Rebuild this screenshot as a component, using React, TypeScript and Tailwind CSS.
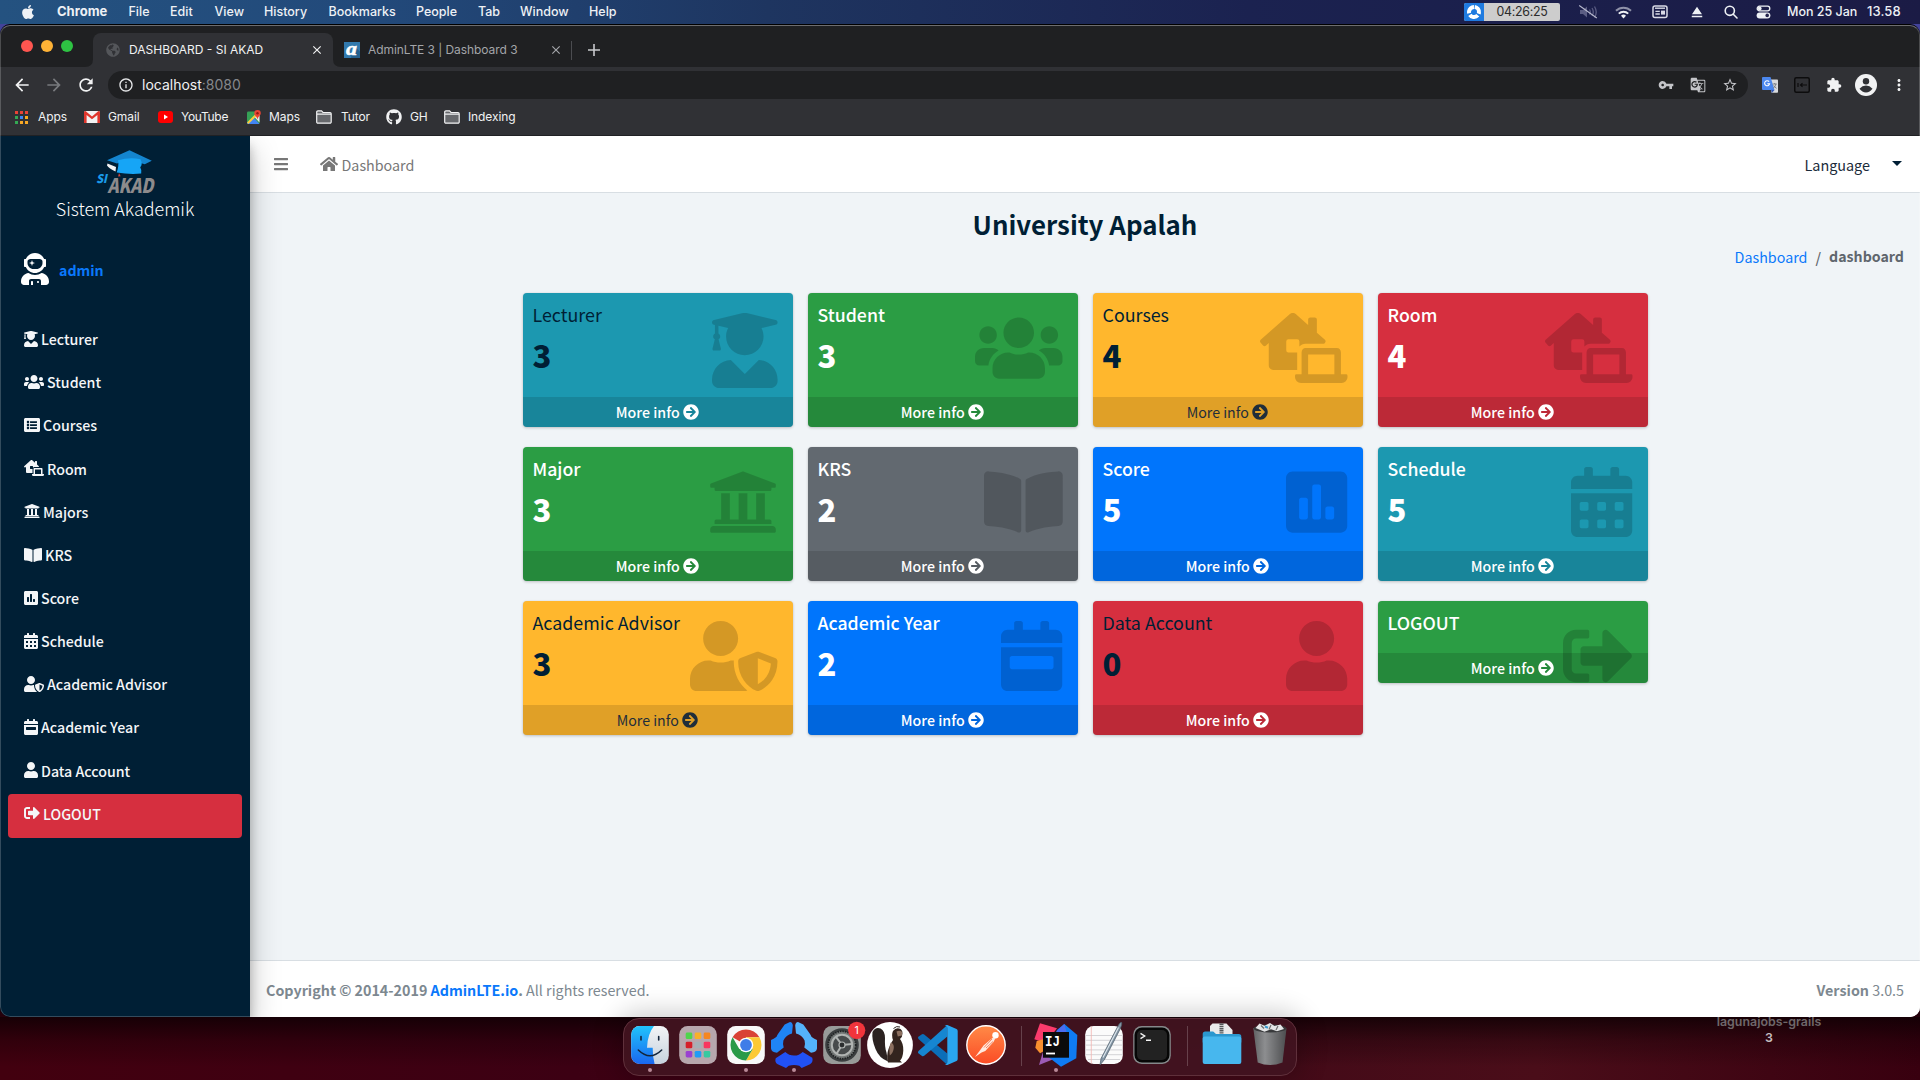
import React from "react";
import type { IconType } from "react-icons";
import {
  FaApple,
  FaArrowCircleRight,
  FaBars,
  FaBookOpen,
  FaCalendarAlt,
  FaCalendarWeek,
  FaGithub,
  FaGlobeAmericas,
  FaHome,
  FaLaptopHouse,
  FaListAlt,
  FaPoll,
  FaSignOutAlt,
  FaUniversity,
  FaUser,
  FaUserAstronaut,
  FaUserGraduate,
  FaUserShield,
  FaUsers,
} from "react-icons/fa";
import {
  MdArrowBack,
  MdArrowForward,
  MdClose,
  MdEject,
  MdExtension,
  MdGTranslate,
  MdInfoOutline,
  MdMoreVert,
  MdRefresh,
  MdStarBorder,
  MdVpnKey,
} from "react-icons/md";

const ui = "font-['Inter',sans-serif]";
const page = "font-['Noto_Sans_CJK_SC',sans-serif]";

/* ---------- macOS menu bar ---------- */

const menus = [
  { label: "File", cell: "w-[41.5px]" },
  { label: "Edit", cell: "w-[44.5px]" },
  { label: "View", cell: "w-[49.5px]" },
  { label: "History", cell: "w-[64.5px]" },
  { label: "Bookmarks", cell: "w-[87.5px]" },
  { label: "People", cell: "w-[62px]" },
  { label: "Tab", cell: "w-[42px]" },
  { label: "Window", cell: "w-[69px]" },
  { label: "Help", cell: "w-[40px]" },
];

function MenuBar() {
  return (
    <header
      className={`${ui} flex h-6 shrink-0 items-center bg-[linear-gradient(90deg,#245280_0%,#22497a_20%,#1e3560_40%,#1b2250_65%,#1b1b45_100%)] text-[12.5px] font-medium text-[#eef1f5]`}
    >
      <div className="flex w-[57px] shrink-0 pl-[20px]">
        <FaApple className="size-[16px]" />
      </div>
      <span className="w-[71.5px] shrink-0 text-[13px] font-bold">Chrome</span>
      {menus.map((m) => (
        <span key={m.label} className={`shrink-0 pt-px ${m.cell}`}>
          {m.label}
        </span>
      ))}
      <div className="ml-auto flex h-6 items-center">
        <div className="flex h-[18px] w-24 items-center overflow-hidden rounded-[2px] bg-[#cdcdcd] text-[#2b2b2b]">
          <span className="flex h-full w-5 items-center justify-center bg-[#1f7be0]">
            <svg viewBox="0 0 16 16" className="size-4" fill="none" stroke="#fff" strokeWidth="4">
              <circle cx="8" cy="8" r="5" strokeDasharray="8.9 1.57" transform="rotate(-82 8 8)" />
            </svg>
          </span>
          <span className="w-[76px] pt-px text-center text-[12.4px] font-normal tracking-[-0.3px]">04:26:25</span>
        </div>
        <div className="ml-[10px] flex w-9 justify-center">
          <svg viewBox="0 0 20 16" className="h-4 w-5">
            <g fill="#5b5d83">
              <path d="M2 6h3l4-3.4v10.8L5 10H2z" />
            </g>
            <path d="M11.5 5.5q1.6 2.5 0 5M14 4q2.6 4 0 8M16.500 2.500q3.500 5.500 0 11" stroke="#5b5d83" strokeWidth="1.3" fill="none" />
            <path d="M1.2 1.5 18.8 14" stroke="#b9bace" strokeWidth="1.1" />
          </svg>
        </div>
        <div className="flex w-[35px] justify-center">
          <svg viewBox="0 0 17 13" className="h-[13px] w-[17px]" fill="none" stroke="#eef1f5" strokeWidth="2">
            <path d="M1 4.8a10.6 10.6 0 0 1 15 0" strokeOpacity=".55" />
            <path d="M3.8 7.6a6.7 6.7 0 0 1 9.4 0" />
            <path d="M8.5 12.4 6 9.8a3.5 3.5 0 0 1 5 0z" fill="#eef1f5" stroke="none" />
          </svg>
        </div>
        <div className="flex w-[37px] justify-center">
          <svg viewBox="0 0 16 14" className="h-[14px] w-4" fill="none" stroke="#d9dae6">
            <rect x="1" y="1" width="14" height="11.4" rx="2" strokeWidth="1.5" />
            <path d="M3 3.2h10" strokeWidth="1.4" />
            <path d="M3.4 6.4h4.4M3.4 9h4.4" strokeWidth="1.3" />
            <rect x="9" y="5.6" width="4" height="4" fill="#d9dae6" stroke="none" />
          </svg>
        </div>
        <div className="flex w-[37px] justify-center">
          <MdEject className="size-[18px]" />
        </div>
        <div className="flex w-8 justify-center">
          <svg viewBox="0 0 14 14" className="size-[14px]" fill="none" stroke="#eef1f5" strokeWidth="1.6" strokeLinecap="round">
            <circle cx="5.8" cy="5.8" r="4.6" />
            <path d="m9.3 9.3 3.7 3.7" />
          </svg>
        </div>
        <div className="flex w-8 justify-center">
          <svg viewBox="0 0 15 14" className="h-[14px] w-[15px]">
            <rect x="1.2" y="1.2" width="12.6" height="4.6" rx="2.3" fill="none" stroke="#eef1f5" strokeWidth="1.3" />
            <circle cx="3.7" cy="3.5" r="1.9" fill="#eef1f5" />
            <rect x=".6" y="7.4" width="13.8" height="6" rx="3" fill="#eef1f5" />
            <circle cx="11.2" cy="10.4" r="1.8" fill="#24244d" />
          </svg>
        </div>
        <span className="ml-2 w-20 whitespace-nowrap">Mon 25 Jan</span>
        <span className="w-[53px] text-[13px] tracking-[0.1px]">13.58</span>
      </div>
    </header>
  );
}

/* ---------- Chrome window frame ---------- */

function TabStrip() {
  return (
    <div className={`${ui} flex h-[42px] shrink-0 items-end bg-[#1f2022] text-[12px]`}>
      <div className="flex h-[42px] w-[93px] shrink-0 items-center gap-2 pl-[21px]">
        <span className="size-3 rounded-full bg-[#fe5650]" />
        <span className="size-3 rounded-full bg-[#feb236]" />
        <span className="size-3 rounded-full bg-[#2ec343]" />
      </div>
      <div className="relative flex h-[34px] w-60 shrink-0 items-center rounded-t-lg bg-[#303135] pl-[13px] text-[#f1f2f3]">
        <svg viewBox="0 0 8 8" className="absolute bottom-0 -left-2 size-2" fill="#303135">
          <path d="M8 0v8H0q8 0 8-8z" />
        </svg>
        <svg viewBox="0 0 8 8" className="absolute -right-2 bottom-0 size-2" fill="#303135">
          <path d="M0 0v8h8q-8 0-8-8z" />
        </svg>
        <FaGlobeAmericas className="size-[14px] text-[#54565a]" />
        <span className="ml-[9px] w-[181px] whitespace-nowrap">DASHBOARD - SI AKAD</span>
        <MdClose className="size-[14px]" />
      </div>
      <div className="flex h-[34px] w-[238px] shrink-0 items-center pl-[11px] text-[#a3a5a9]">
        <svg viewBox="0 0 16 16" className="size-4">
          <rect width="16" height="16" fill="#3279ad" />
          <path d="M10 4 16 9.500V16H7z" fill="#24608e" />
          <text x="2" y="13.200" fontSize="18" fontStyle="italic" fontWeight="900" fill="#fff" stroke="#fff" strokeWidth=".5" fontFamily="Liberation Serif, serif" textLength="11" lengthAdjust="spacingAndGlyphs">
            a
          </text>
        </svg>
        <span className="ml-2 w-[181px] whitespace-nowrap tracking-[-0.06px]">AdminLTE 3 | Dashboard 3</span>
        <MdClose className="size-[14px]" />
      </div>
      <div className="flex h-[34px] items-center">
        <span className="h-[19px] w-px bg-[#4b4c50]" />
        <svg viewBox="0 0 12 12" className="ml-4 size-3" stroke="#c9cacd" strokeWidth="1.6">
          <path d="M6 0v12M0 6h12" />
        </svg>
      </div>
    </div>
  );
}

function Toolbar() {
  return (
    <div className={`${ui} flex h-9 shrink-0 items-center bg-[#303135] text-[#f1f2f3]`}>
      <div className="flex w-[108px] shrink-0 items-center pl-[12px]">
        <MdArrowBack className="size-5" />
        <MdArrowForward className="ml-3 size-5 text-[#77797d]" />
        <MdRefresh className="ml-3 size-5" />
      </div>
      <div className="flex h-7 w-[1640px] shrink-0 items-center rounded-full bg-[#1f2022] pl-[10px] text-[14px]">
        <MdInfoOutline className="size-4 text-[#e6e7e9]" />
        <span className="ml-2 pb-px">
          localhost<span className="text-[#85878b]">:8080</span>
        </span>
        <div className="mr-[10px] ml-auto flex items-center gap-4 text-[#c3c4c8]">
          <MdVpnKey className="size-4" />
          <MdGTranslate className="size-4" />
          <MdStarBorder className="size-4" />
        </div>
      </div>
      <div className="flex items-center pl-[14px]">
        <svg viewBox="0 0 16 16" className="size-4">
          <path d="M7 2.500h8.200a.8.800 0 0 1 .8.800V15a.8.800 0 0 1-.8.800H9.500z" fill="#d8dadd" />
          <path d="M1 0h7.500l4 13H1a1 1 0 0 1-1-1V1a1 1 0 0 1 1-1z" fill="#4b87ee" />
          <path d="m9 12.700 3.500.3-2.600 2.900z" fill="#2f56b5" />
          <path d="M7.100 4.700a2.500 2.500 0 1 0 .5 2H5.300" fill="none" stroke="#fff" strokeWidth="1.100" />
          <path d="M10.500 7h4.300M12.700 6v1m1.200 0q-.5 2.500-2.600 4.200M11.600 8.500q1 1.800 3 2.800" fill="none" stroke="#6c7076" strokeWidth=".8" />
        </svg>
        <svg viewBox="0 0 16 16" className="ml-4 size-4" fill="none" stroke="#0c0c0d">
          <rect x=".75" y=".75" width="14.500" height="14.500" rx="1.500" strokeWidth="1.500" />
          <path d="M4 6v4M6.500 8H13M8.500 6.300 6.500 8l2 1.700" strokeWidth="1.200" />
        </svg>
        <MdExtension className="ml-4 size-4" />
        <svg viewBox="0 0 22 22" className="ml-[13px] size-[22px]">
          <circle cx="11" cy="11" r="11" fill="#f1f2f3" />
          <circle cx="11" cy="7.200" r="3.200" fill="#303135" />
          <path d="M4.500 14.800q2.800-3.200 6.500-3.200t6.500 3.200q-2.600 3.700-6.500 3.700t-6.500-3.700z" fill="#303135" />
        </svg>
        <MdMoreVert className="ml-[13px] size-[18px]" />
      </div>
    </div>
  );
}

function FolderOutline() {
  return (
    <svg viewBox="0 0 16 14" className="h-[14px] w-4">
      <path d="M.7 2a1.200 1.200 0 0 1 1.200-1.200h3.600L7 2.500h7a1.200 1.200 0 0 1 1.200 1.200v8.300a1.200 1.200 0 0 1-1.200 1.200H1.900A1.200 1.200 0 0 1 .7 12z" fill="#66686c" stroke="#f1f2f3" strokeWidth="1.200" />
      <path d="M1 4.200h14" stroke="#f1f2f3" strokeWidth="1.200" />
    </svg>
  );
}

const appDots = [
  ["#ea4335", "#ea4335", "#ea4335"],
  ["#34a853", "#4285f4", "#fbab1c"],
  ["#34a853", "#f9a825", "#f9a825"],
];

function Bookmarks() {
  return (
    <div className={`${ui} flex h-[33px] shrink-0 items-center border-b border-[#202124] bg-[#303135] pb-[4px] text-[12px] tracking-[-0.1px] text-[#f1f2f3]`}>
      <div className="flex w-[84px] shrink-0 items-center pl-[15px]">
        <svg viewBox="0 0 13 13" className="size-[13px]">
          {appDots.map((row, y) =>
            row.map((c, x) => <rect key={`${x}-${y}`} x={x * 5} y={y * 5} width="3" height="3" fill={c} />),
          )}
        </svg>
        <span className="ml-[10px]">Apps</span>
      </div>
      <div className="flex w-[74px] shrink-0 items-center">
        <svg viewBox="0 0 16 12" className="h-3 w-4">
          <path d="M1.500 0h13A1.500 1.500 0 0 1 16 1.500V12H0V1.500A1.500 1.500 0 0 1 1.500 0z" fill="#f2f2f2" />
          <path d="M0 1.500A1.500 1.500 0 0 1 1.500 0L8 5.500 14.500 0A1.500 1.500 0 0 1 16 1.500V12h-2.600V4L8 8.300 2.600 4v8H0z" fill="#e0362c" />
        </svg>
        <span className="ml-2">Gmail</span>
      </div>
      <div className="flex w-[89px] shrink-0 items-center tracking-[-0.3px]">
        <svg viewBox="0 0 15 12" className="h-3 w-[15px]">
          <rect width="15" height="12" rx="3" fill="#f00" />
          <path d="M6 3.500v5L10 6z" fill="#fff" />
        </svg>
        <span className="ml-2">YouTube</span>
      </div>
      <div className="flex w-[69px] shrink-0 items-center">
        <svg viewBox="0 0 14 14" className="size-[14px]">
          <rect y="1.500" width="12.500" height="12.500" rx="1.200" fill="#35a156" />
          <path d="m0 13 6.500-5.500L12.500 14H1a1 1 0 0 1-1-1z" fill="#4285f4" />
          <path d="m7.500 7 5-4v9.500z" fill="#e8e8e8" />
          <path d="M0 12.500 10.500 2l1.500 1.500L1.500 14z" fill="#fbcb3c" />
          <path d="M10.500 0A3.300 3.300 0 0 1 13.800 3.300C13.800 5.500 11 6.500 10.500 9.500 10 6.500 7.200 5.500 7.200 3.300A3.300 3.300 0 0 1 10.500 0z" fill="#e94435" />
          <circle cx="10.500" cy="3.300" r="1.200" fill="#8e1b12" />
        </svg>
        <span className="ml-2">Maps</span>
      </div>
      <div className="flex w-[70px] shrink-0 items-center">
        <FolderOutline />
        <span className="ml-[9px]">Tutor</span>
      </div>
      <div className="flex w-[58px] shrink-0 items-center">
        <FaGithub className="size-4" />
        <span className="ml-2">GH</span>
      </div>
      <div className="flex items-center">
        <FolderOutline />
        <span className="ml-2">Indexing</span>
      </div>
    </div>
  );
}

/* ---------- Sidebar ---------- */

const navItems: { label: string; icon: IconType; width: string }[] = [
  { label: "Lecturer", icon: FaUserGraduate, width: "w-[14px]" },
  { label: "Student", icon: FaUsers, width: "w-5" },
  { label: "Courses", icon: FaListAlt, width: "w-4" },
  { label: "Room", icon: FaLaptopHouse, width: "w-5" },
  { label: "Majors", icon: FaUniversity, width: "w-4" },
  { label: "KRS", icon: FaBookOpen, width: "w-[18px]" },
  { label: "Score", icon: FaPoll, width: "w-[14px]" },
  { label: "Schedule", icon: FaCalendarAlt, width: "w-[14px]" },
  { label: "Academic Advisor", icon: FaUserShield, width: "w-5" },
  { label: "Academic Year", icon: FaCalendarWeek, width: "w-[14px]" },
  { label: "Data Account", icon: FaUser, width: "w-[14px]" },
];

function Logo() {
  return (
    <svg viewBox="0 0 58 44" className="ml-24 h-11 w-[58px] overflow-visible">
      <path d="M11.500 13.500 20 17l-.5 4.500Q13 18.500 11 15.500z" fill="#f4f4f4" />
      <path d="m33.500.3 22.300 10.500-7 3.400L32 9.500l-11 4-10-3.200z" fill="#1485cf" />
      <path d="M22 10.200q12-3.400 22.500-1 2.500 5-.3 8 2 3.300 1 6.300-11 1.300-24.500-1 2.500-7 1.300-12.300z" fill="#16a5f6" />
      <path d="m23 23 1.600 3.300-2.500.3z" fill="#d6463c" />
      <g fontFamily="Noto Sans CJK SC, sans-serif" fontStyle="italic" fontWeight="900">
        <text x="0" y="32.500" fontSize="12" fill="#1a9bea" textLength="11" lengthAdjust="spacingAndGlyphs">
          SI
        </text>
        <text x="11.500" y="42.500" fontSize="20" fill="#8d8b8c" textLength="46" lengthAdjust="spacingAndGlyphs">
          AKAD
        </text>
      </g>
    </svg>
  );
}

function Sidebar() {
  return (
    <aside className="z-10 flex w-[250px] shrink-0 flex-col bg-[#001f35] pt-[14px] text-[14.2px] text-[#f4f6f8] shadow-[0_14px_28px_rgba(0,0,0,0.25),0_10px_10px_rgba(0,0,0,0.22)]">
      <Logo />
      <div className="h-7 text-center text-[17.9px] leading-7 font-light text-white">Sistem Akademik</div>
      <div className="mt-[31px] flex h-8 items-center pl-[21px]">
        <FaUserAstronaut className="h-8 w-7 text-white" />
        <span className="ml-[10px] pt-[3px] font-bold text-[#0a78fb]">admin</span>
      </div>
      <nav className="mt-[34.35px] font-medium">
        {navItems.map(({ label, icon: Icon, width }) => (
          <div key={label} className="h-[43.15px]">
            <a className="flex h-[39px] items-center gap-[3px] pl-6">
              <Icon className={`h-4 ${width}`} />
              <span className="pt-[2px]">{label}</span>
            </a>
          </div>
        ))}
        <a className="mx-2 flex h-11 items-center gap-[3px] rounded bg-[#d62f3f] pb-[5px] pl-4">
          <FaSignOutAlt className="size-4" />
          <span className="pt-[2px]">LOGOUT</span>
        </a>
      </nav>
    </aside>
  );
}

/* ---------- Dashboard content ---------- */

type Card = {
  title: string;
  value?: string;
  icon: IconType;
  bg: string;
  text?: string;
  link?: string;
  size?: string;
};

const navy = "text-[17.85px] text-[#001f35]";
const white = "text-[17.7px] font-medium text-white";
const dimLink = "text-[#1f2d3a]";

const cards: Card[] = [
  { title: "Lecturer", value: "3", icon: FaUserGraduate, bg: "bg-[#1c98b0]", text: navy, size: "h-[75px] w-[65.6px]" },
  { title: "Student", value: "3", icon: FaUsers, bg: "bg-[#2b9d44]", size: "h-[70px] w-[87.5px]" },
  { title: "Courses", value: "4", icon: FaLaptopHouse, bg: "bg-[#ffb72d]", text: navy, link: dimLink, size: "h-[70px] w-[87.5px]" },
  { title: "Room", value: "4", icon: FaLaptopHouse, bg: "bg-[#d62f3f]", size: "h-[70px] w-[87.5px]" },
  { title: "Major", value: "3", icon: FaUniversity, bg: "bg-[#2b9d44]", size: "size-[70px]" },
  { title: "KRS", value: "2", icon: FaBookOpen, bg: "bg-[#626970]", size: "h-[70px] w-[78.75px]" },
  { title: "Score", value: "5", icon: FaPoll, bg: "bg-[#0075fc]", size: "h-[70px] w-[61.25px]" },
  { title: "Schedule", value: "5", icon: FaCalendarAlt, bg: "bg-[#1c98b0]", size: "h-[70px] w-[61.25px]" },
  { title: "Academic Advisor", value: "3", icon: FaUserShield, bg: "bg-[#ffb72d]", text: navy, link: dimLink, size: "h-[70px] w-[87.5px]" },
  { title: "Academic Year", value: "2", icon: FaCalendarWeek, bg: "bg-[#0075fc]", size: "h-[70px] w-[61.25px]" },
  { title: "Data Account", value: "0", icon: FaUser, bg: "bg-[#d62f3f]", text: navy, size: "h-[70px] w-[61.25px]" },
  { title: "LOGOUT", icon: FaSignOutAlt, bg: "bg-[#2b9d44]", size: "size-[70px]" },
];

function InfoCard({ title, value, icon: Icon, bg, text = white, link = "font-medium text-white", size }: Card) {
  return (
    <section className={`relative rounded shadow-[0_0_1px_rgba(0,0,0,0.125),0_1px_3px_rgba(0,0,0,0.2)] ${bg}`}>
      <div className={`px-[10px] pt-[9px] ${value ? "h-[104px]" : "h-[52px]"} ${text}`}>
        <h5 className="leading-6">{title}</h5>
        {value && <div className="mt-[8.5px] text-[31px] leading-10 font-black">{value}</div>}
      </div>
      <div className={`flex h-[30px] items-center justify-center gap-[3.5px] rounded-b bg-black/12 text-[14.2px] ${link}`}>
        <span className="pt-[2px]">More info</span>
        <FaArrowCircleRight className="size-4" />
      </div>
      <Icon className={`absolute top-5 right-[15px] text-black/17 ${size}`} />
    </section>
  );
}

function Dashboard() {
  return (
    <main className="flex min-w-0 flex-1 flex-col bg-[#f0f4f7]">
      <div className="flex h-[57px] shrink-0 items-center border-b border-[#d8dee3] bg-white text-[14.3px] text-[#777777]">
        <FaBars className="ml-6 h-4 w-[14px]" />
        <FaHome className="ml-8 h-4 w-[18px]" />
        <span className="ml-[3.5px] pt-[2px]">Dashboard</span>
        <span className="mr-[22px] ml-auto pt-[2px] text-[14.4px] text-[#1b2b3a]">Language</span>
        <span className="mr-[18px] mb-[2px] border-x-[5px] border-t-[5px] border-x-transparent border-t-[#001f35]" />
      </div>
      <div className="flex flex-1 flex-col pt-[10px]">
        <h1 className="h-[42px] text-center text-[25.85px] leading-[42px] font-bold text-[#001f35]">University Apalah</h1>
        <div className="flex h-6 items-center justify-end pr-4 text-[14.3px] text-[#5f666d]">
          <span className="text-[#0a78fb]">Dashboard</span>
          <span className="mx-[8px] font-medium">/</span>
          <span className="text-[14.2px] font-bold">dashboard</span>
        </div>
        <div className="mt-6 grid grid-cols-[repeat(4,270px)] items-start justify-center gap-x-[15px] gap-y-5">
          {cards.map((c) => (
            <InfoCard key={c.title} {...c} />
          ))}
        </div>
      </div>
      <footer className="flex h-[57px] shrink-0 items-center border-t border-[#d8dee3] bg-white px-4 pt-[2px] text-[14.3px] text-[#7d8890]">
        <b>Copyright © 2014-2019&nbsp;</b>
        <b className="text-[#0a78fb]">AdminLTE.io</b>
        <b>.</b>
        <span>&nbsp;All rights reserved.</span>
        <span className="ml-auto">
          <b>Version</b> 3.0.5
        </span>
      </footer>
    </main>
  );
}

/* ---------- Dock ---------- */

function Slot({ children, running }: { children: React.ReactNode; running?: boolean }) {
  return (
    <div className="flex w-12 flex-col items-center">
      <svg viewBox="0 0 48 48" className="size-12">
        {children}
      </svg>
      {running && <span className="mt-[-1px] size-1 rounded-full bg-[#b98a98]" />}
    </div>
  );
}

function Separator() {
  return (
    <div className="flex w-[22px] justify-center pt-[5px]">
      <span className="h-10 w-px bg-white/20" />
    </div>
  );
}

const launchpad = [
  ["#4fd44c", "#f8b02a", "#f5861f"],
  ["#d5202a", "#a4b0b6", "#f9365f"],
  ["#9a40d0", "#1f9cf6", "#36c9a0"],
];

function Dock() {
  return (
    <div className="flex h-[58px] w-[674px] rounded-[16px] border border-[#5f303b] bg-[#411320]/95 px-[2px] pt-[2px] shadow-[0_0_26px_6px_rgba(0,0,0,0.2)]">
      <Slot running>
        <defs>
          <linearGradient id="finderBlue" x1="0" y1="0" x2="0" y2="1">
            <stop offset="0" stopColor="#20c3fb" />
            <stop offset="1" stopColor="#1a67f0" />
          </linearGradient>
          <linearGradient id="finderLight" x1="0" y1="0" x2="0" y2="1">
            <stop offset="0" stopColor="#f3f4f6" />
            <stop offset="1" stopColor="#c6d2de" />
          </linearGradient>
        </defs>
        <rect x="5.200" y="5" width="37.600" height="38" rx="8.500" fill="url(#finderLight)" />
        <path d="M28 5H13.700a8.500 8.500 0 0 0-8.500 8.500v21a8.500 8.500 0 0 0 8.500 8.500H28.600Q26.500 36 26.700 26.700H21Q21.500 13 28 5z" fill="url(#finderBlue)" />
        <path d="M15 15.500v3.500M32.700 15.500v3.500" stroke="#14253b" strokeWidth="1.600" strokeLinecap="round" />
        <path d="M12.300 29q11.700 11.500 23.400 0" fill="none" stroke="#14253b" strokeWidth="1.500" strokeLinecap="round" />
      </Slot>
      <Slot>
        <rect x="5.200" y="5" width="37.600" height="38" rx="8.500" fill="#b7a7ad" />
        {launchpad.map((row, y) =>
          row.map((c, x) => (
            <rect key={`${x}-${y}`} x={11.700 + x * 9} y={11.500 + y * 9.200} width="6.600" height="6.600" rx="1.400" fill={c} />
          )),
        )}
      </Slot>
      <Slot running>
        <rect x="5.200" y="5" width="37.600" height="38" rx="8.500" fill="#f8f8f8" />
        <path d="M24 24 10.580 16.250A15.500 15.500 0 0 1 37.420 16.250L24 16.250z" fill="#d94235" />
        <path d="M24 24 24 16.250H37.420A15.500 15.500 0 0 1 24 39.500L30.700 27.900z" fill="#fcc934" />
        <path d="M24 24 30.700 27.900 24 39.500A15.500 15.500 0 0 1 10.580 16.250L17.300 27.900z" fill="#2a9a48" />
        <circle cx="24" cy="24" r="7.300" fill="#fff" />
        <circle cx="24" cy="24" r="5.900" fill="#3f7de8" />
      </Slot>
      <Slot running>
        <path d="M14.700 3.500 20 1q2.500 0 2.800 3.500L22 12.500q-6 1.500-8.600 7-.9 3.500.3 7L7 31.700Q1.500 31.500 1 27.500L1 19q6-2.500 6.200-4.800.8-1.300 7.500-10.700z" fill="#1f84f5" />
        <path d="M33.300 3.500 28 1q-2.500 0-2.800 3.500L26 12.500q6 1.500 8.600 7 .9 3.500-.3 7L41 31.700q5.500-.2 6-4.200V19q-6-2.500-6.200-4.800-.8-1.300-7.500-10.700z" fill="#54b3fb" />
        <path d="M5.700 37.300 15.300 31q3.700 3.500 8.700 3.600t8.700-3.600l9.600 5.800q1.200 4.200-2.300 6.500L31.700 47l-2.400-2.300q-5.300-1.600-10.600 0L16 47l-8.300-3.700q-3.300-2-2-6z" fill="#2151f5" />
      </Slot>
      <Slot>
        <rect x="5.200" y="5" width="37.600" height="38" rx="8.500" fill="#989b99" />
        <circle cx="24" cy="24" r="16.800" fill="#3b3f40" />
        <circle cx="24" cy="24" r="13.800" fill="#747978" stroke="#202324" strokeWidth="1.800" strokeDasharray="1.500 1" />
        <circle cx="24" cy="24" r="10.200" fill="#474b4c" stroke="#b0b4b2" strokeWidth="2" />
        <path d="M24 24 34 23M24 24l-6.200-8.400M24 24l-5.500 8.800" stroke="#b0b4b2" strokeWidth="2" />
        <circle cx="24" cy="24" r="3" fill="#2a2d2e" stroke="#b0b4b2" strokeWidth="1.200" />
        <circle cx="38.700" cy="9.300" r="8.600" fill="#f1343b" />
        <text x="38.700" y="13" fontSize="10.500" fill="#fff" textAnchor="middle" fontFamily="Inter, sans-serif">
          1
        </text>
      </Slot>
      <Slot>
        <circle cx="24" cy="24" r="22.900" fill="#fff" />
        <path d="M6.500 11q3-5.500 8-3.500 4.500 2.500 4.500 9.500-.5 9 1.500 14.500l1.500 9q-9-3.500-12.500-12.500Q5.500 18.500 6.500 11z" fill="#2b2220" />
        <path d="M27 10q2.500-3.200 6-2.500 3.500.8 3.500 5 0 3.500-2.500 5.500 3.500 4.500 3.300 11.500-.4 7.500-3.300 10l2 2H22q-1.800-7 .5-13.500 1.500-5 4.500-9-1.800-5 0-9z" fill="#33241e" />
        <path d="M24.800 21.500q3.400 1 3 5.500t-4 7.500q-1.200-7 1-13zM30.500 10.500q3.200-1.600 5.500.3v3.800l-4.200.9z" fill="#8b6f5f" />
        <path d="M27.500 7.500q3-3 6.500-1.500" fill="none" stroke="#2b2220" strokeWidth="1" />
      </Slot>
      <Slot>
        <path d="M4.300 15.800 8 13.200q1.200-.6 2.200.2L33.300 32.500V44L4.500 18q-1-1.200-.2-2.200z" fill="#0b6eb8" />
        <path d="M4.300 32.200 8 34.900q1.200.6 2.200-.2L33.300 15.500V4L4.500 30q-1 1.200-.2 2.200z" fill="#1686d1" />
        <path d="M33.300 4 42.500 8q1.200.7 1.200 2v28q0 1.300-1.200 2L33.300 44q-1.600.3-2.600-1 2.600.8 2.600-2V7q0-2.800-2.600-2 1-1.300 2.600-1z" fill="#2aa6f0" />
      </Slot>
      <Slot>
        <defs>
          <linearGradient id="orange" x1="0" y1="0" x2="0" y2="1">
            <stop offset="0" stopColor="#ff8a47" />
            <stop offset="1" stopColor="#fb4b25" />
          </linearGradient>
        </defs>
        <circle cx="24" cy="24" r="19.200" fill="url(#orange)" stroke="#fff" strokeWidth="1.400" />
        <circle cx="33.500" cy="14.300" r="3.200" fill="#fff" />
        <path d="M31 16.500 21.500 24.500l-3.800 5.200-4.700 6.300 6.500-4.500 3.800-1.500L31.500 21l2-4z" fill="#ffe9df" />
        <path d="M30 18 22 26.500M31 20.500l-7 6.500" stroke="#f26a3c" strokeWidth=".8" />
      </Slot>
      <Separator />
      <Slot running>
        <path d="M8 2.300 25 7.300 14 22 2.300 18.300z" fill="#fb3b6c" />
        <path d="M4.700 20 12 18v12l-4 2.300L3.300 26.700z" fill="#f7902e" />
        <path d="M11 30.700 7 44 25 36.700V25z" fill="#9c5bb5" />
        <path d="M32.300 3 45.300 14l-1 23.300L29 45.700 17 36.500 25 9z" fill="#0f7bf3" />
        <path d="M32.300 3 24.700 10 22 16h14z" fill="#4a6cf0" />
        <rect x="11" y="11" width="26" height="25.700" fill="#0b0b0b" />
        <text x="13" y="25" fontSize="14" fontWeight="700" fill="#fff" fontFamily="Liberation Mono, monospace" textLength="15" lengthAdjust="spacingAndGlyphs">
          IJ
        </text>
        <path d="M14 32.500h9" stroke="#fff" strokeWidth="1.800" />
      </Slot>
      <Slot>
        <rect x="5.200" y="5" width="37.600" height="38" rx="8.500" fill="#fbfbfb" />
        <path d="M5.200 14.500h37.600M5.200 19.300h37.600M5.200 24.100h37.600M5.200 28.900h37.600M5.200 33.700h37.600M8 38.500h32" stroke="#cfcfd2" strokeWidth=".9" />
        <path d="M11.300 5.500v37" stroke="#f2b4b0" strokeWidth=".8" />
        <path d="M38.500 4q2.300-3.800 3.300-2.300.3 2-1.500 6L24.500 38.500 20 44l1-6.500z" fill="#8496a5" stroke="#4a5a68" strokeWidth=".7" />
        <path d="M38.500 6.500 23 36.500" stroke="#dfe8ee" strokeWidth="1.100" />
      </Slot>
      <Slot>
        <rect x="5.200" y="5" width="37.600" height="38" rx="8.500" fill="#85888a" />
        <rect x="6.500" y="6.500" width="35" height="35" rx="7.500" fill="#060606" />
        <rect x="9" y="9" width="30" height="30" rx="5" fill="#222" />
        <path d="m12.500 12.300 4.200 2.700-4.200 2.700M18 19.300h5" stroke="#f5f5f5" strokeWidth="1.400" fill="none" />
      </Slot>
      <Separator />
      <Slot>
        <path d="M14.500 2.500h14L34.500 9v9H12V5z" fill="#e9e9ea" />
        <path d="M23.500 2.500v10" stroke="#55585a" strokeWidth="4" strokeDasharray="1.500 .7" />
        <path d="M4.700 13q0-2.500 2.500-2.500h8L18 13h22.800q2.500 0 2.500 2.500v6H4.700z" fill="#2b97cf" />
        <path d="M4.700 17.500q0-2 2-2h34.600q2 0 2 2V41q0 2-2 2H6.700q-2 0-2-2z" fill="#47b7ee" />
      </Slot>
      <Slot>
        <defs>
          <linearGradient id="bin" x1="0" y1="0" x2="1" y2="0">
            <stop offset="0" stopColor="#606163" />
            <stop offset=".35" stopColor="#8d8e90" />
            <stop offset="1" stopColor="#4c4d4f" />
          </linearGradient>
        </defs>
        <path d="M7.300 7 36 5.500 40.500 7.500 36.500 41.500Q24 46.500 11.700 41.500z" fill="url(#bin)" />
        <ellipse cx="24" cy="7.500" rx="16.300" ry="4" fill="#38393b" />
        <path d="m9.500 7 4-4.500 5 2.200L24 2l4.500 3 6-1.500L38 8l-7 2.300-6-2-6.500 2.500z" fill="#e4e5e6" />
        <path d="m15 4.500 3 3M25 4l-2 4.500M32 5l-2 4" stroke="#6d6e70" strokeWidth="1.200" />
        <path d="m19 5.500 3 1.200" stroke="#3a9ad0" strokeWidth="2" />
      </Slot>
    </div>
  );
}

export default function App() {
  return (
    <div className="flex h-[1080px] w-[1920px] flex-col overflow-hidden bg-[linear-gradient(180deg,#43439a_0,#43439a_60px,#1c0008_400px,#1c0008_1000px,#3a0012_1050px)]">
      <MenuBar />
      <div
        className={`${page} relative flex h-[993px] shrink-0 flex-col overflow-hidden rounded-[10px] border-t border-black`}
      >
        <TabStrip />
        <Toolbar />
        <Bookmarks />
        <div className="flex min-h-0 flex-1 overflow-hidden">
          <Sidebar />
          <Dashboard />
        </div>
        <div className="pointer-events-none absolute inset-0 z-20 rounded-[10px] border border-white/20 border-t-white/35" />
      </div>
      <div className="z-30 flex h-[63px] shrink-0 justify-center bg-[linear-gradient(180deg,rgba(12,0,3,0.8)_0,rgba(12,0,3,0.3)_24px,transparent_50px),linear-gradient(90deg,#42000f_0%,#3c0013_30%,#430a18_65%,#4a0d19_80%,#38000f_100%)]">
        <div className="w-[623px] shrink-0" />
        <div className="shrink-0 pt-px">
          <Dock />
        </div>
        <div className="w-[623px] shrink-0 overflow-hidden">
          <div className={`${ui} ml-[412px] w-[120px] text-center text-[12.4px] leading-4 font-semibold`}>
            <div className="mt-[-3px] whitespace-nowrap text-[#6f676a]">lagunajobs-grails</div>
            <div className="text-[#c4bdc0]">3</div>
          </div>
        </div>
      </div>
    </div>
  );
}
